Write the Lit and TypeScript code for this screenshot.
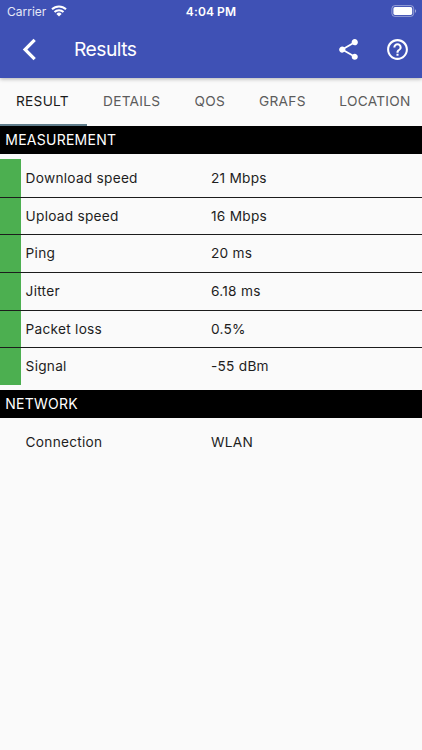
import { LitElement, html, css } from "lit";
import { customElement, property, state } from "lit/decorators.js";
import { classMap } from "lit/directives/class-map.js";

interface Measure { label: string; value: string; rated: boolean; }

@customElement("status-bar")
class StatusBar extends LitElement {
  static styles = css`
    :host { display: grid; grid-template-columns: 1fr auto 1fr; align-items: center; height: 22px; padding: 0 7px; color: #fff; font-size: 12px; }
    .carrier { display: flex; align-items: center; gap: 5px; letter-spacing: 0; color: #e6e8f6; }
    .time { font-weight: 600; letter-spacing: 0.1px; }
    .battery { justify-self: end; display: block; margin-right: -2px; }
    svg { display: block; }
  `;
  render() {
    return html`
      <div class="carrier"><span>Carrier</span>
        <svg width="16" height="12" viewBox="0 0 16 12" fill="none" stroke="#fff" stroke-width="2">
          <path d="M1 4.3a10 10 0 0 1 14 0M3.5 7a6.4 6.4 0 0 1 9 0" />
          <path d="M8 11.4 5.4 8.9a3.7 3.7 0 0 1 5.2 0z" fill="#fff" stroke="none" />
        </svg>
      </div>
      <div class="time">4:04 PM</div>
      <svg class="battery" width="26" height="12" viewBox="0 0 26 12">
        <rect x="0.9" y="0.6" width="21.8" height="10.8" rx="3" fill="none" stroke="#fff" stroke-opacity=".45" />
        <rect x="2.4" y="2.1" width="18.8" height="7.8" rx="1.6" fill="#fff" />
        <path d="M24 4.2c1.5.5 1.5 3.1 0 3.6z" fill="#fff" fill-opacity=".5" />
      </svg>`;
  }
}

@customElement("section-title")
class SectionTitle extends LitElement {
  static styles = css`
    :host { display: block; box-sizing: border-box; height: 27.6px; line-height: 28px; padding-left: 5.3px; background: #000; color: #fff; font-size: 14px; letter-spacing: 0.25px; }
  `;
  render() { return html`<slot></slot>`; }
}

@customElement("measure-list")
class MeasureList extends LitElement {
  @property({ attribute: false }) items: Measure[] = [];
  static styles = css`
    :host { display: block; padding: 5.3px 0; }
    .row { display: grid; grid-template-columns: 20.6px 190.4px 1fr; grid-template-rows: 100%; box-sizing: border-box; height: 37.67px; line-height: 38.4px; font-size: 13.7px; letter-spacing: 0.25px; color: #1e1e1e; }
    .row + .row { background: linear-gradient(#1c1c1c, #1c1c1c) 0 0 / 100% 1px no-repeat; }
    .row + .row .mark { margin-top: 1px; }
    .rated { background: #4caf50; }
    .label { padding-left: 5px; }
  `;
  render() {
    return this.items.map((m) => html`
      <div class="row">
        <span class=${classMap({ mark: true, rated: m.rated })}></span>
        <span class="label">${m.label}</span><span>${m.value}</span>
      </div>`);
  }
}

@customElement("app-root")
class AppRoot extends LitElement {
  @state() private active = 0;
  private tabs = ["RESULT", "DETAILS", "QOS", "GRAFS", "LOCATION"];
  private measurement: Measure[] = [
    { label: "Download speed", value: "21 Mbps", rated: true },
    { label: "Upload speed", value: "16 Mbps", rated: true },
    { label: "Ping", value: "20 ms", rated: true },
    { label: "Jitter", value: "6.18 ms", rated: true },
    { label: "Packet loss", value: "0.5%", rated: true },
    { label: "Signal", value: "-55 dBm", rated: true },
  ];
  private network: Measure[] = [{ label: "Connection", value: "WLAN", rated: false }];

  static styles = css`
    :host { display: block; height: 750px; overflow: hidden; background: #fafafa; font-family: Inter, "Liberation Sans", sans-serif; }
    header { height: 77.6px; background: #3f51b5; color: #fff; box-shadow: 0 1px 4px rgba(0, 0, 0, 0.3); }
    .bar { display: flex; align-items: center; height: 54.4px; padding: 0 12px 0 17.5px; }
    .title { flex: 1; margin-left: 31.5px; font-size: 19.3px; line-height: 24px; letter-spacing: -0.55px; }
    .icon { display: block; width: 25px; height: 25px; fill: #fff; }
    .help { margin-left: 24px; }
    nav { display: grid; grid-template-columns: 87px 91.6px 64.4px 80.3px 105px; height: 48.7px; }
    .tab { box-sizing: border-box; border-bottom: 2px solid transparent; line-height: 46px; padding-left: 16px; font-size: 13.7px; letter-spacing: 0.28px; color: #5c5c5c; white-space: nowrap; }
    .active { color: #1b1b1b; border-color: #607d8b; }
  `;
  render() {
    return html`
      <header>
        <status-bar></status-bar>
        <div class="bar">
          <svg class="icon" viewBox="0 0 24 24"><path d="M17.1 3.9 14.9 1.7 4.6 12l10.3 10.3 2.2-2.2L9 12z" /></svg>
          <span class="title">Results</span>
          <svg class="icon" viewBox="0 0 24 24"><path d="M18 16.08c-.76 0-1.44.3-1.96.77L8.91 12.7c.05-.23.09-.46.09-.7s-.04-.47-.09-.7l7.05-4.11c.54.5 1.25.81 2.04.81 1.66 0 3-1.34 3-3s-1.34-3-3-3-3 1.34-3 3c0 .24.04.47.09.7L8.04 9.81C7.5 9.31 6.79 9 6 9c-1.66 0-3 1.34-3 3s1.34 3 3 3c.79 0 1.5-.31 2.04-.81l7.12 4.16c-.05.21-.08.43-.08.65 0 1.61 1.31 2.92 2.92 2.92s2.92-1.31 2.92-2.92-1.31-2.92-2.92-2.92z" /></svg>
          <svg class="icon help" viewBox="0 0 24 24"><path d="M11 18h2v-2h-2v2zm1-16C6.48 2 2 6.48 2 12s4.48 10 10 10 10-4.48 10-10S17.52 2 12 2zm0 18c-4.41 0-8-3.59-8-8s3.59-8 8-8 8 3.59 8 8-3.59 8-8 8zm0-14c-2.21 0-4 1.79-4 4h2c0-1.1.9-2 2-2s2 .9 2 2c0 2-3 1.75-3 5h2c0-2.25 3-2.5 3-5 0-2.21-1.79-4-4-4z" /></svg>
        </div>
      </header>
      <nav>
        ${this.tabs.map((t, i) => html`<div class=${classMap({ tab: true, active: i === this.active })} @click=${() => (this.active = i)}>${t}</div>`)}
      </nav>
      <section-title>MEASUREMENT</section-title>
      <measure-list .items=${this.measurement}></measure-list>
      <section-title>NETWORK</section-title>
      <measure-list .items=${this.network}></measure-list>`;
  }
}
